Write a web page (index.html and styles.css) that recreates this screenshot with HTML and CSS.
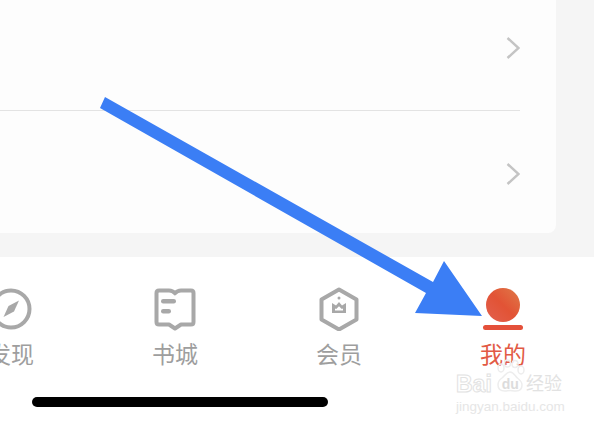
FILE: index.html
```html
<!DOCTYPE html>
<html lang="zh">
<head>
  <meta charset="UTF-8" />
  <title>我的</title>
  <link rel="stylesheet" href="styles.css">
</head>
<body>
  <div class="content">
    <div class="card">
      <div class="row row-first">
        <svg class="chevron" width="14" height="22" viewBox="0 0 14 22"><path d="M1.5 1l11 10-11 10" /></svg>
      </div>
      <div class="row row-last">
        <svg class="chevron" width="14" height="22" viewBox="0 0 14 22"><path d="M1.5 1l11 10-11 10" /></svg>
      </div>
    </div>
  </div>

  <div class="tabbar">
    <div class="tabs">
      <div class="tab">
        <svg class="tab-icon" width="44" height="44" viewBox="0 0 44 44">
          <circle class="line" cx="22" cy="22" r="18.500" />
          <path class="fill" d="M30 13.500L25 24.500 14.500 30 19.500 19z" />
        </svg>
        <span class="tab-label">发现</span>
      </div>
      <div class="tab">
        <svg class="tab-icon" width="44" height="44" viewBox="0 0 44 44">
          <path class="line" d="M6 3.500h10c2.500 0 4.500 1 6 2.800 1.500-1.800 3.500-2.800 6-2.800h10c1.500 0 2.500 1 2.500 2.500v29c0 1.500-1 2.500-2.500 2.500H28l-6 4-6-4H6c-1.500 0-2.500-1-2.500-2.500V6c0-1.500 1-2.500 2.500-2.500z" />
          <rect class="fill" x="8" y="12" width="15" height="4.500" rx="2.200" />
          <rect class="fill" x="8" y="22" width="10" height="4.500" rx="2.200" />
        </svg>
        <span class="tab-label">书城</span>
      </div>
      <div class="tab">
        <svg class="tab-icon" width="44" height="44" viewBox="0 0 44 44">
          <path class="line" d="M22 2.500l17.500 10v20L22 42.500l-17.500-10v-20z" />
          <circle class="fill" cx="22" cy="11" r="1.500" />
          <path class="fill" fill-rule="evenodd" d="M15 16l4 2.500 3-3.500 3 3.500 4-2.500v10H15zM18 21.500v2h8v-2l-1.200.6-2.800-2.800-2.800 2.800z" />
        </svg>
        <span class="tab-label">会员</span>
      </div>
      <div class="tab tab-active">
        <div class="avatar"></div>
        <div class="avatar-line"></div>
        <span class="tab-label">我的</span>
      </div>
    </div>
    <div class="home-bar"></div>
  </div>

  <!-- annotation on top of the screenshot -->
  <svg class="arrow" width="594" height="423" viewBox="0 0 594 423">
    <path d="M100 108L105 97 433 282 444 261 482 316 415 313 426 293z" />
  </svg>

  <div class="watermark">
    <svg class="wm-paw" width="30" height="34" viewBox="0 0 30 34">
      <ellipse cx="6" cy="9" rx="3" ry="4" />
      <ellipse cx="12.500" cy="4.500" rx="3" ry="3.500" />
      <ellipse cx="20" cy="5" rx="3" ry="3.500" />
      <ellipse cx="26" cy="11" rx="3" ry="4" />
      <path d="M15 13c-4 0-5 4-8 6-3 2-4 4-4 7 0 4 3 6 7 6 2 0 3-.5 5-.5s3 .5 6 .5c4 0 6-2.500 6-6 0-3-2-5-4-6.500-3-2-4-6.500-8-6.500z" />
    </svg>
    <div class="wm-top"><span class="wm-bai">Bai</span><span class="wm-du">du</span><span class="wm-jy">经验</span></div>
    <div class="wm-url">jingyan.baidu.com</div>
  </div>
</body>
</html>
```

FILE: styles.css
```css
html, body {
  margin: 0;
  height: 423px;
  overflow: hidden;
}

body {
  font-family: "Noto Sans CJK SC", "Liberation Sans", sans-serif;
  background-color: #fff;
}

.content {
  height: 257px;
  background-color: #f5f5f5;
}

.card {
  width: 520px;
  height: 233px;
  padding-right: 36px;
  background-color: #fdfdfd;
  border-bottom-right-radius: 8px;
}

.row {
  display: flex;
  justify-content: flex-end;
}

.row-first {
  height: 73px;
  padding-top: 37px;
  border-bottom: 1px solid #e3e3e3;
}

.row-last {
  padding-top: 52px;
}

.chevron {
  display: block;
}

.chevron path {
  fill: none;
  stroke: #c4c4c4;
  stroke-width: 2.4;
}

.tabbar {
  height: 166px;
}

.tabs {
  display: grid;
  grid-template-columns: repeat(4, 164px);
  margin-left: -71px;
  padding-top: 30px;
}

.tab {
  display: flex;
  flex-direction: column;
  align-items: center;
  color: #9e9e9e;
}

.tab-icon {
  display: block;
}

.tab-icon .line {
  fill: none;
  stroke: #a8a8a8;
  stroke-width: 4;
  stroke-linejoin: round;
}

.tab-icon .fill {
  fill: #a8a8a8;
}

.tab-label {
  margin-top: 6px;
  font-size: 23px;
  line-height: 32px;
}

.tab-active {
  color: #e25a45;
}

.avatar {
  width: 34px;
  height: 34px;
  margin-top: 1px;
  border-radius: 50%;
  background: linear-gradient(45deg, #e2604f 0%, #e25335 50%, #df7a48 100%);
}

.avatar-line {
  width: 40px;
  height: 5px;
  margin-top: 3px;
  border-radius: 2.500px;
  background-color: #e4503a;
}

.tab-active .tab-label {
  margin-top: 7px;
}

.home-bar {
  width: 296px;
  height: 10px;
  margin: 28px 0 0 32px;
  border-radius: 5px;
  background-color: #000;
}

.arrow {
  position: absolute;
  top: 0;
  left: 0;
}

.arrow path {
  fill: #3b7ef5;
}

.watermark {
  position: absolute;
  top: 372px;
  left: 456px;
  width: 110px;
  color: #fff;
  font-family: "Liberation Sans", "Noto Sans CJK SC", sans-serif;
}

.wm-paw {
  position: absolute;
  top: -13px;
  left: 39px;
}

.wm-paw ellipse,
.wm-paw path {
  fill: none;
  stroke: #ededed;
  stroke-width: 1.500;
}

.wm-top {
  position: relative;
  display: flex;
  align-items: center;
  white-space: nowrap;
  font-size: 23px;
  line-height: 24px;
  -webkit-text-stroke: 1px #e2e2e2;
}

.wm-bai {
  font-weight: bold;
}

.wm-du {
  margin-left: 10px;
  font-size: 14px;
  -webkit-text-stroke: 0;
  color: #dcdcdc;
  font-weight: bold;
}

.wm-jy {
  margin-left: 7px;
  font-size: 18px;
  -webkit-text-stroke: 0;
  color: #e2e2e2;
}

.wm-url {
  margin-top: 3px;
  font-size: 13.500px;
  line-height: 16px;
  white-space: nowrap;
  color: #e6e6e6;
}
```
